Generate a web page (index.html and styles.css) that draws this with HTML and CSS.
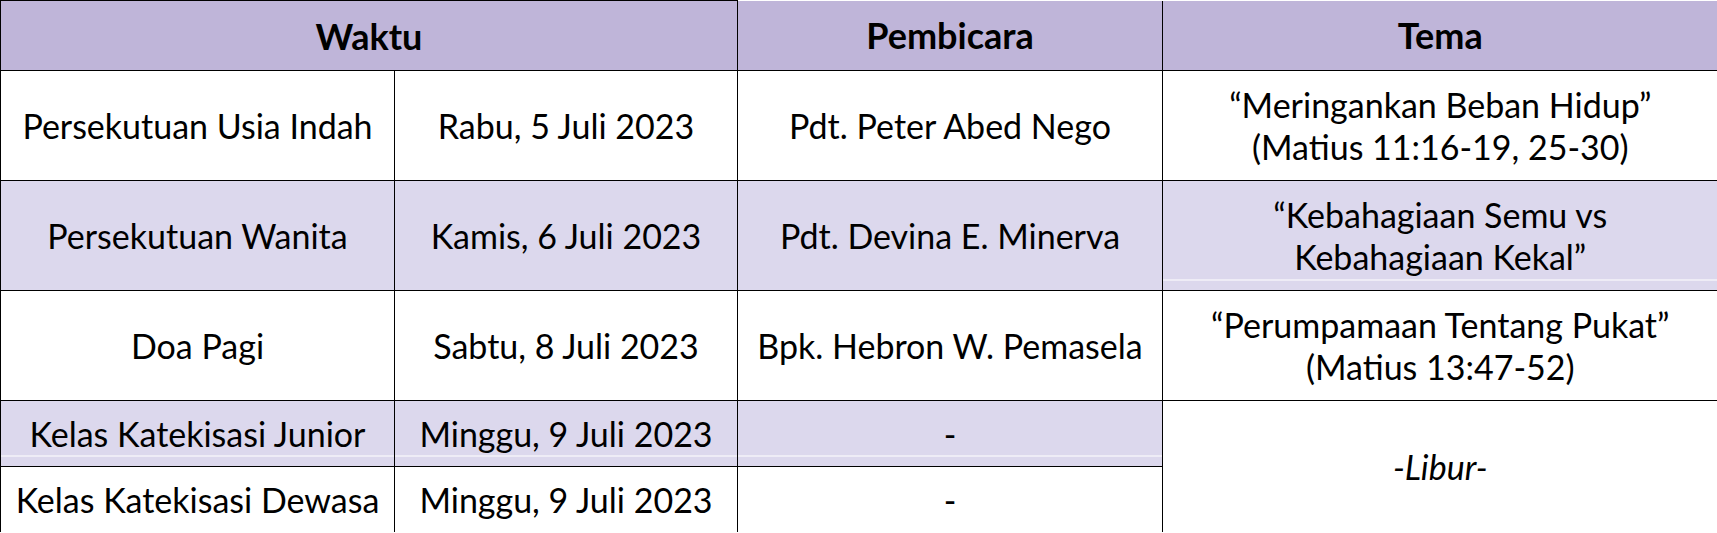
FILE: index.html
```html
<!DOCTYPE html>
<html lang="id">
<head>
<meta charset="utf-8">
<title>Jadwal Kegiatan</title>
<link rel="stylesheet" href="styles.css">
</head>
<body>
<table class="schedule">
  <colgroup>
    <col class="c1"><col class="c2"><col class="c3"><col class="c4">
  </colgroup>
  <thead>
    <tr class="head">
      <th colspan="2" class="top">Waktu</th>
      <th>Pembicara</th>
      <th>Tema</th>
    </tr>
  </thead>
  <tbody>
    <tr class="tall">
      <td>Persekutuan Usia Indah</td>
      <td>Rabu, 5 Juli 2023</td>
      <td>Pdt. Peter Abed Nego</td>
      <td>“Meringankan Beban Hidup”<br>(Matius 11:16-19, 25-30)</td>
    </tr>
    <tr class="tall shade">
      <td>Persekutuan Wanita</td>
      <td>Kamis, 6 Juli 2023</td>
      <td>Pdt. Devina E. Minerva</td>
      <td class="streak">“Kebahagiaan Semu vs<br>Kebahagiaan Kekal”</td>
    </tr>
    <tr class="tall">
      <td>Doa Pagi</td>
      <td>Sabtu, 8 Juli 2023</td>
      <td>Bpk. Hebron W. Pemasela</td>
      <td>“Perumpamaan Tentang Pukat”<br>(Matius 13:47-52)</td>
    </tr>
    <tr class="short shade">
      <td class="streak">Kelas Katekisasi Junior</td>
      <td class="streak">Minggu, 9 Juli 2023</td>
      <td class="streak">-</td>
      <td rowspan="2" class="plain"><em>-Libur-</em></td>
    </tr>
    <tr class="short">
      <td>Kelas Katekisasi Dewasa</td>
      <td>Minggu, 9 Juli 2023</td>
      <td>-</td>
    </tr>
  </tbody>
</table>
</body>
</html>
```

FILE: styles.css
```css
html, body {
  margin: 0;
  padding: 0;
  background: #ffffff;
}

.schedule {
  width: 1717px;
  table-layout: fixed;
  border-collapse: collapse;
  font-family: Lato, "Liberation Sans", sans-serif;
  font-size: 34px;
  color: #000000;
}

.c1 { width: 394px; }
.c2 { width: 343px; }
.c3 { width: 425px; }
.c4 { width: 555px; }

.schedule th,
.schedule td {
  border: 1px solid #000000;
  text-align: center;
  vertical-align: middle;
  padding: 0;
  line-height: 42px;
  white-space: nowrap;
}

.schedule tr > :first-child { border-left: 1px solid #000000; }
.schedule tr > :last-child { border-right: none; }
.schedule tbody tr:last-child td { border-bottom: none; }
.schedule .plain { border-bottom: none; border-right: none; }

.head th {
  background: #bfb5d9;
  font-weight: 700;
  height: 69px;
  border-top: none;
  font-size: 36px;
}

.head th.top { border-top: 1px solid #000000; }

.tall td { height: 109px; }
.short td { height: 65px; }

.shade td {
  background: #dcd8ed;
}

.shade td.streak {
  background: linear-gradient(to top, #dcd8ed 0 10px, #ffffff 10px 11px, #dcd8ed 11px);
}

.shade td.plain { background: #ffffff; }

em { font-style: italic; }
```
